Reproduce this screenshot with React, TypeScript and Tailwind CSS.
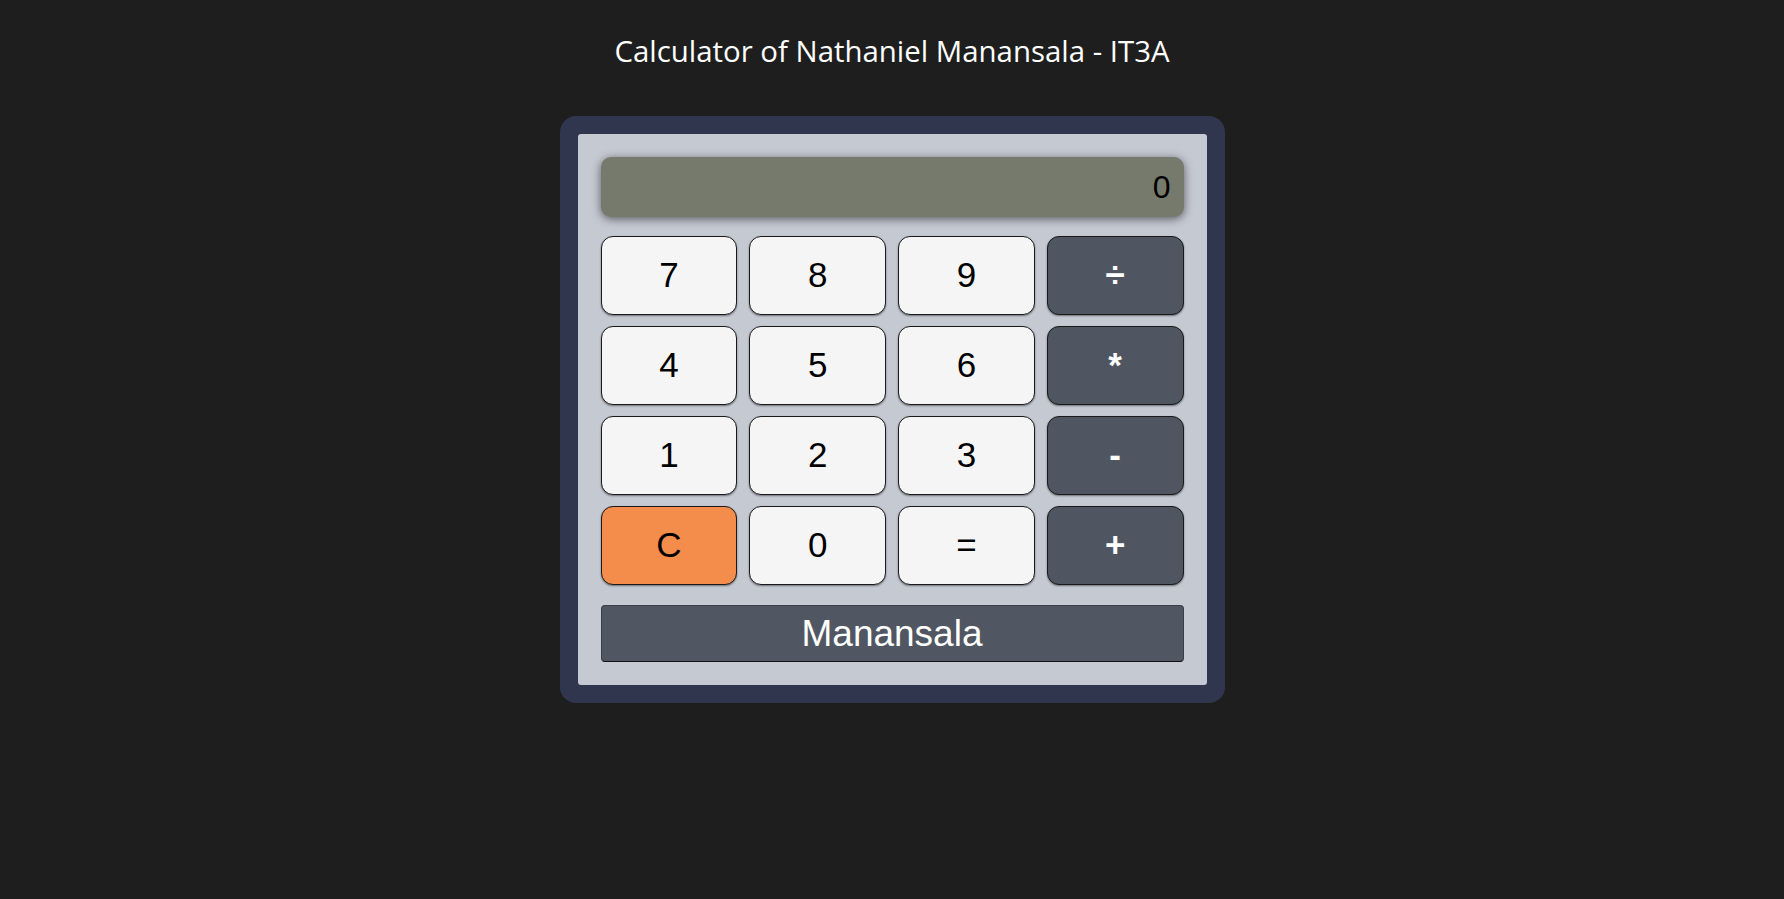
import React, { useState } from "react";

type Key = {
  label: string;
  kind: "num" | "op" | "clear";
};

const keys: Key[] = [
  { label: "7", kind: "num" },
  { label: "8", kind: "num" },
  { label: "9", kind: "num" },
  { label: "÷", kind: "op" },
  { label: "4", kind: "num" },
  { label: "5", kind: "num" },
  { label: "6", kind: "num" },
  { label: "*", kind: "op" },
  { label: "1", kind: "num" },
  { label: "2", kind: "num" },
  { label: "3", kind: "num" },
  { label: "-", kind: "op" },
  { label: "C", kind: "clear" },
  { label: "0", kind: "num" },
  { label: "=", kind: "num" },
  { label: "+", kind: "op" },
];

const App = () => {
  const [display, setDisplay] = useState("0");

  // very small evaluator, enough for the buttons on screen
  const handleKey = (label: string) => {
    if (label === "C") {
      setDisplay("0");
      return;
    }
    if (label === "=") {
      try {
        const expr = display.replace(/÷/g, "/");
        // eslint-disable-next-line no-new-func
        const result = Function(`return (${expr})`)();
        setDisplay(String(result));
      } catch {
        setDisplay("Error");
      }
      return;
    }
    setDisplay((prev) => (prev === "0" || prev === "Error" ? label : prev + label));
  };

  const keyClass = (kind: Key["kind"]) => {
    if (kind === "op")
      return "bg-[#4f5661] text-white font-bold";
    if (kind === "clear") return "bg-[#f48c4c] text-black";
    return "bg-[#f5f5f5] text-black";
  };

  return (
    <div
      className="min-h-screen w-full bg-[#1e1e1e] flex flex-col items-center"
      style={{ fontFamily: '"Liberation Sans", Arial, sans-serif' }}
    >
      <h1
        className="mt-[31px] h-[40px] leading-[40px] text-[29.4px] text-white font-normal"
        style={{ fontFamily: '"Open Sans", "Noto Sans", sans-serif' }}
      >
        Calculator of Nathaniel Manansala - IT3A
      </h1>

      <div className="mt-[45px] w-[665px] rounded-[16px] bg-[#31364f] p-[18px]">
        <div className="rounded-[3px] bg-[#c5c9d2] p-[23px]">
          {/* Display */}
          <div className="h-[60px] rounded-[10px] bg-[#767a6c] px-[13px] flex items-center justify-end text-[32px] text-black shadow-[0_2px_10px_rgba(0,0,0,0.55)]">
            {display}
          </div>

          {/* Keypad */}
          <div className="mt-[19px] grid grid-cols-4 gap-x-3 gap-y-[11px]">
            {keys.map((k) => (
              <button
                key={k.label}
                onClick={() => handleKey(k.label)}
                className={`h-[79px] rounded-[12px] border border-[#1a1a1a] text-[35px] flex items-center justify-center shadow-[0_1px_2px_rgba(0,0,0,0.45)] ${keyClass(
                  k.kind
                )}`}
              >
                {k.label}
              </button>
            ))}
          </div>

          <button className="mt-[20px] h-[57px] w-full rounded-[4px] border border-[#3a3f48] border-b-[#111] bg-[#505762] text-white text-[37px] flex items-center justify-center">
            Manansala
          </button>
        </div>
      </div>
    </div>
  );
};

export default App;
